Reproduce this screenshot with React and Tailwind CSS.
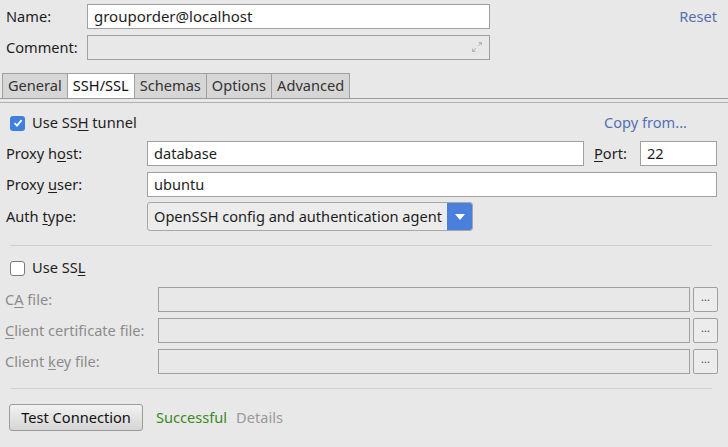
import { useState } from 'react';

const U = ({ children }) => <span className="underline underline-offset-2">{children}</span>;

const Check = ({ checked }) =>
  checked ? (
    <span className="flex h-[15px] w-[15px] items-center justify-center rounded-[3px] bg-[#3f7fe0]">
      <svg width="10" height="10" viewBox="0 0 10 10">
        <path d="M1.5 5.2 L4 7.6 L8.6 2.2" fill="none" stroke="white" strokeWidth="1.8" />
      </svg>
    </span>
  ) : (
    <span className="h-[15px] w-[15px] rounded-[3px] border border-[#7a7a7a] bg-white" />
  );

const FileRow = ({ label }) => (
  <div className="flex h-[25px] items-center">
    <div className="w-[158px] pl-[5px] text-[#8c8c8c]">{label}</div>
    <div className="h-[25px] w-[532px] border border-[#a0a0a0] bg-[#e8e8e8]" />
    <button className="ml-[3px] flex h-[25px] w-[25px] items-center justify-center rounded-[2px] border border-[#a0a0a0] bg-[#ececec] pb-[6px] text-[11px] leading-none text-[#444]">
      ...
    </button>
  </div>
);

const App = () => {
  const [tab] = useState('SSH/SSL');
  const tabs = ['General', 'SSH/SSL', 'Schemas', 'Options', 'Advanced'];

  return (
    <div className="h-[447px] w-[728px] overflow-hidden bg-[#e8e8e8] text-[14.6px] text-[#1e1e1e]" style={{ fontFamily: '"Noto Sans", sans-serif' }}>
      {/* name / comment */}
      <div className="flex h-[25px] items-center mt-[4px]">
        <div className="w-[87px] pl-[6px]">Name:</div>
        <div className="flex h-[25px] w-[403px] items-center border border-[#a0a0a0] bg-white pl-[6px] text-[15px]">grouporder@localhost</div>
        <div className="flex-1 pr-[11px] text-right text-[#5670b4]">Reset</div>
      </div>
      <div className="mt-[6px] flex h-[25px] items-center">
        <div className="w-[87px] pl-[6px]">Comment:</div>
        <div className="relative h-[25px] w-[403px] border border-[#a0a0a0] bg-[#e8e8e8]">
          <svg className="absolute right-[6px] top-[5px]" width="12" height="12" viewBox="0 0 12 12">
            <path d="M7 1 H11 V5 Z M1 7 V11 H5 Z" fill="#b8b8b8" />
            <path d="M10 2 L7 5 M2 10 L5 7" stroke="#b8b8b8" strokeWidth="1" />
          </svg>
        </div>
      </div>

      {/* tabs */}
      <div className="mt-[13px] flex h-[26px] border-b border-[#9a9a9a] pl-[2px]">
        {tabs.map((t) => (
          <div
            key={t}
            className={
              'flex h-[25px] items-center border border-b-0 border-[#a0a0a0] px-[5px] -ml-px first:ml-0 ' +
              (t === tab ? 'bg-white text-[#111]' : 'bg-[#d6d6d6] text-[#333]')
            }
          >
            {t}
          </div>
        ))}
      </div>
      <div className="mt-[3px] h-px bg-[#b0b0b0]" />

      {/* ssh */}
      <div className="mt-[10px] flex h-[20px] items-center pl-[10px]">
        <Check checked />
        <span className="ml-[7px]">Use SS<U>H</U> tunnel</span>
        <span className="ml-auto pr-[41px] text-[#5670b4]">Copy from...</span>
      </div>
      <div className="mt-[8px] flex h-[25px] items-center">
        <div className="w-[147px] pl-[6px]">Proxy h<U>o</U>st:</div>
        <div className="flex h-[25px] w-[437px] items-center border border-[#a0a0a0] bg-white pl-[6px]">database</div>
        <div className="w-[56px] pl-[10px]"><U>P</U>ort:</div>
        <div className="flex h-[25px] w-[77px] items-center border border-[#a0a0a0] bg-white pl-[6px]">22</div>
      </div>
      <div className="mt-[6px] flex h-[25px] items-center">
        <div className="w-[147px] pl-[6px]">Proxy <U>u</U>ser:</div>
        <div className="flex h-[25px] w-[570px] items-center border border-[#a0a0a0] bg-white pl-[6px]">ubuntu</div>
      </div>
      <div className="mt-[5px] flex h-[29px] items-center">
        <div className="w-[147px] pl-[6px]">Auth <U>t</U>ype:</div>
        <div className="flex h-[29px] w-[326px] overflow-hidden rounded-[3px] border border-[#a8a8a8] bg-[#ececec]">
          <div className="flex flex-1 items-center pl-[6px]">OpenSSH config and authentication agent</div>
          <div className="flex w-[25px] items-center justify-center bg-[#4a80dc]">
            <svg width="10" height="6" viewBox="0 0 10 6">
              <path d="M0 0 H10 L5 6 Z" fill="white" />
            </svg>
          </div>
        </div>
      </div>

      <div className="ml-[10px] mt-[14px] h-px w-[702px] bg-[#cfcfcf]" />

      {/* ssl */}
      <div className="mt-[12px] flex h-[20px] items-center pl-[10px]">
        <Check checked={false} />
        <span className="ml-[7px]">Use SS<U>L</U></span>
      </div>
      <div className="mt-[9px] flex flex-col gap-[6px]">
        <FileRow label={<>C<U>A</U> file:</>} />
        <FileRow label={<><U>C</U>lient certificate file:</>} />
        <FileRow label={<>Client <U>k</U>ey file:</>} />
      </div>

      <div className="ml-[11px] mt-[14px] h-px w-[701px] bg-[#cfcfcf]" />

      <div className="mt-[15px] flex h-[27px] items-center pl-[9px]">
        <button className="h-[27px] w-[134px] rounded-[3px] border border-[#9c9c9c] bg-gradient-to-b from-[#f2f2f2] to-[#d6d6d6] text-[#111]">
          Test Connection
        </button>
        <span className="ml-[13px] text-[#3a8a1e]">Successful</span>
        <span className="ml-[9px] text-[#9a9a9a]">Details</span>
      </div>
    </div>
  );
};

export default App;
